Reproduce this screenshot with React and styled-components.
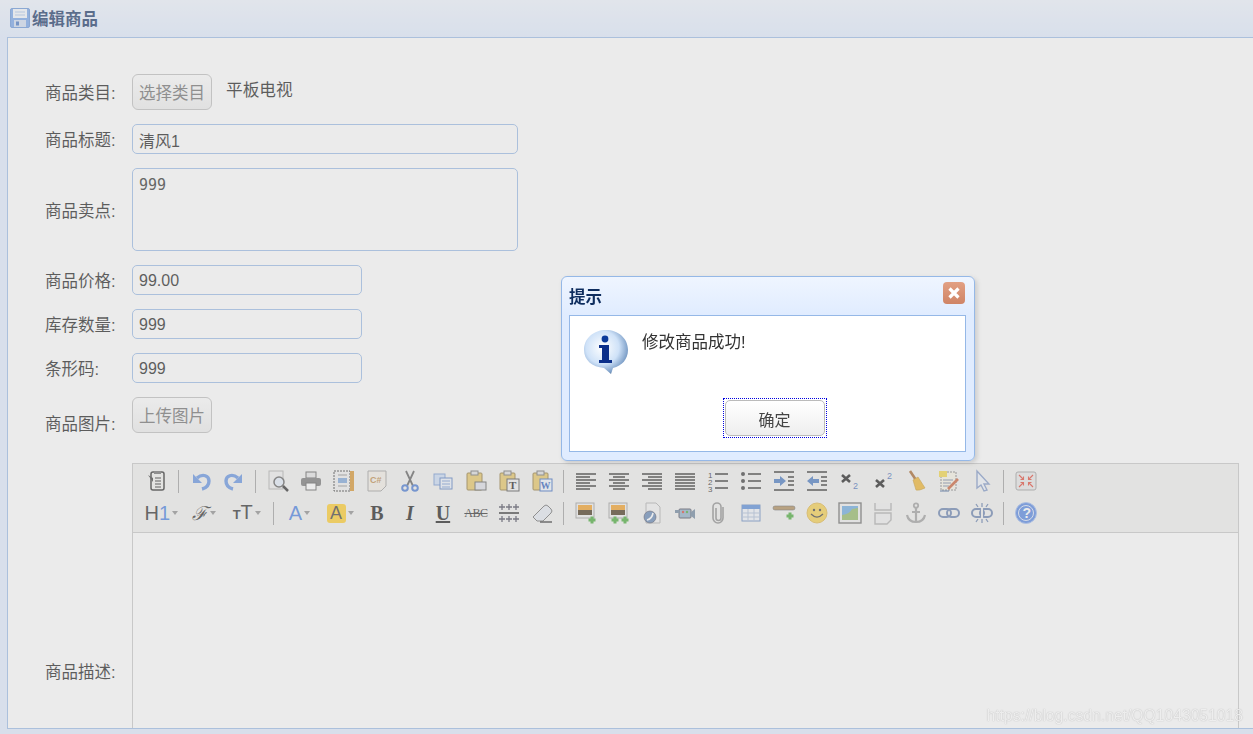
import styled, { createGlobalStyle } from "styled-components";

const GlobalStyle = createGlobalStyle`
  html, body { margin: 0; padding: 0; }
  body {
    font-family: "Liberation Sans", "Noto Sans CJK SC", sans-serif;
    font-size: 16px;
    color: #333;
  }
`;

const Page = styled.div`
  width: 1253px;
  height: 734px;
  overflow: hidden;
  background: #e0ecff;
`;

const PanelHeader = styled.div`
  box-sizing: border-box;
  height: 37px;
  padding: 0 0 2px 10px;
  display: flex;
  align-items: center;
  gap: 2px;
  background: linear-gradient(#eff5ff, #e0ecff);
`;

const PanelTitle = styled.span`
  font-size: 16.5px;
  font-weight: bold;
  color: #0e2d5f;
`;

const Panel = styled.div`
  box-sizing: border-box;
  width: 1250px;
  height: 692px;
  margin-left: 7px;
  padding: 36px 0 0 37px;
  border: 1px solid #95b8e7;
  background: #fff;
  overflow: hidden;
  display: flex;
  flex-direction: column;
  gap: 14px;
`;

const Row = styled.div`
  display: grid;
  grid-template-columns: 87px auto;
  justify-content: start;
  align-items: ${(p) => p.$align || "center"};
  margin-top: ${(p) => p.$top || 0}px;
`;

const Label = styled.label`
  padding-top: 2px;
  font-size: 16.5px;
  line-height: 18px;
  color: #111;
`;

const Field = styled.div`
  display: flex;
  align-items: center;
`;

const Input = styled.input`
  box-sizing: border-box;
  width: ${(p) => p.$w}px;
  height: 30px;
  padding: 2px 6px 0;
  border: 1px solid #95b8e7;
  border-radius: 5px;
  background: #fff;
  font: inherit;
  color: #111;
  outline: none;
`;

const TextArea = styled.textarea`
  box-sizing: border-box;
  width: 386px;
  height: 83px;
  padding: 7px 6px;
  border: 1px solid #95b8e7;
  border-radius: 5px;
  background: #fff;
  font-family: "DejaVu Sans Mono", monospace;
  font-size: 15px;
  color: #222;
  resize: none;
  outline: none;
`;

const GreyButton = styled.button`
  box-sizing: border-box;
  width: 80px;
  height: 36px;
  padding: 0;
  border: 1px solid #bbb;
  border-radius: 6px;
  background: linear-gradient(#fff, #eee);
  font: inherit;
  font-size: 16.5px;
  color: #666;
`;

const Category = styled.span`
  margin: 0 0 6px 14px;
  font-size: 16.7px;
  color: #111;
`;

const Editor = styled.div`
  box-sizing: border-box;
  width: 1107px;
  height: 416px;
  border: 1px solid #c5c5c5;
  background: #fff;
`;

const Toolbar = styled.div`
  height: 64px;
  padding: 1px 0 3px 7px;
  display: flex;
  flex-direction: column;
  background: #f1f1ef;
  border-bottom: 1px solid #c5c5c5;
`;

const ToolRow = styled.div`
  height: 32px;
  display: flex;
  align-items: center;
`;

const ToolButton = styled.div`
  flex: none;
  width: ${(p) => p.$w || 33}px;
  height: 32px;
  display: flex;
  align-items: center;
  justify-content: center;
  gap: 2px;
`;

const Separator = styled.div`
  flex: none;
  width: 1px;
  height: 23px;
  margin: 0 5px;
  background: #999;
`;

const Caret = styled.i`
  width: 0;
  height: 0;
  border: 3.5px solid transparent;
  border-top: 4px solid #888;
  border-bottom: 0;
`;

const ComboText = styled.span`
  font-size: 20px;
  line-height: 24px;
  color: ${(p) => p.$color || "#222"};
`;

const FontGlyph = styled.span`
  font-family: "DejaVu Serif", serif;
  font-style: italic;
  font-size: 19px;
  line-height: 24px;
  color: #222;
`;

const SmallT = styled.span`
  font-size: 13px;
  font-weight: bold;
  color: #222;
`;

const Highlight = styled.span`
  width: 19px;
  height: 19px;
  border-radius: 3px;
  background: #ffca1e;
  font-size: 18px;
  line-height: 19px;
  text-align: center;
  color: #333;
`;

const SerifGlyph = styled.span`
  font-family: "Liberation Serif", serif;
  font-weight: bold;
  font-style: ${(p) => (p.$italic ? "italic" : "normal")};
  font-size: 20px;
  line-height: 24px;
  color: #111;
  text-decoration: ${(p) => (p.$under ? "underline" : "none")};
`;

const StrikeGlyph = styled.span`
  font-family: "Liberation Serif", serif;
  font-size: 12px;
  letter-spacing: -0.5px;
  color: #222;
  text-decoration: line-through;
`;

const Mask = styled.div`
  position: fixed;
  inset: 0;
  background: rgba(204, 204, 204, 0.4);
`;

const Dialog = styled.div`
  position: fixed;
  left: 561px;
  top: 276px;
  box-sizing: border-box;
  width: 414px;
  height: 185px;
  padding: 0 8px 8px 7px;
  display: flex;
  flex-direction: column;
  border: 1px solid #95b8e7;
  border-radius: 6px;
  background: linear-gradient(#eff5ff, #e0ecff 38px);
  box-shadow: 2px 2px 5px rgba(0, 0, 0, 0.15);
`;

const DialogHead = styled.div`
  flex: none;
  height: 38px;
  display: flex;
  align-items: center;
  justify-content: space-between;
`;

const DialogTitle = styled.span`
  font-size: 16.5px;
  font-weight: bold;
  color: #0e2d5f;
`;

const Close = styled.span`
  width: 22px;
  height: 22px;
  margin: -6px 1px 0 0;
  border-radius: 4px;
  background: linear-gradient(#e2a084, #cf8466);
  display: flex;
  align-items: center;
  justify-content: center;
`;

const DialogBody = styled.div`
  flex: 1;
  display: flex;
  flex-direction: column;
  border: 1px solid #95b8e7;
  background: #fff;
`;

const Message = styled.div`
  display: flex;
  gap: 14px;
  padding: 14px 0 0 14px;
  font-size: 16.5px;
  line-height: 24px;
  color: #333;
`;

const DialogActions = styled.div`
  margin-top: auto;
  padding: 0 0 13px 14px;
  display: flex;
  justify-content: center;
`;

const FocusRing = styled.div`
  padding: 1px;
  border: 1px dotted #0000e0;
  display: flex;
`;

const OkButton = styled.button`
  box-sizing: border-box;
  width: 100px;
  height: 36px;
  padding: 1px 0 0;
  border: 1px solid #bbb;
  border-radius: 5px;
  background: linear-gradient(#fff, #eee);
  font: inherit;
  color: #444;
  outline: none;
`;

const Watermark = styled.div`
  position: fixed;
  right: 10px;
  top: 706px;
  font-size: 15.7px;
  line-height: 20px;
  color: rgba(255, 255, 255, 0.8);
  text-shadow: 0 0 1px rgba(110, 110, 110, 0.6);
`;

const Bars = ({ rows, color = "#1a1a1a", width = 1.7 }) => (
  <path d={rows.map(([a, b, y]) => `M${a} ${y}H${b}`).join("")} stroke={color} strokeWidth={width} fill="none" />
);

const align = (odd, even) => [5, 8, 11, 14, 17, 20].map((y, i) => [...(i % 2 ? even : odd), y]);

const Plus = ({ x, y }) => <path d={`M${x - 3.5} ${y}h7M${x} ${y - 3.5}v7`} stroke="#3fa52e" strokeWidth="3" />;

const Board = () => (
  <>
    <rect x="3" y="4" width="15" height="17" rx="1" fill="#e6c45c" stroke="#8a7030" />
    <rect x="7" y="2" width="7" height="4" fill="#ddd" stroke="#666" />
  </>
);

const Sunset = () => (
  <>
    <rect x="2" y="2" width="18" height="15" fill="#eee" stroke="#999" />
    <rect x="4" y="4" width="14" height="5" fill="#f29a1a" />
    <rect x="4" y="9" width="14" height="5" fill="#3c2a10" />
  </>
);

const Arrow = ({ left }) => (
  <path d={left ? "M2 12l6-5v3h6v4H8v3z" : "M14 12l-6-5v3H2v4h6v3z"} fill="#3f72bd" />
);

const LinkPills = () => (
  <>
    <rect x="2" y="8" width="12" height="8" rx="4" fill="none" stroke="#627cab" strokeWidth="2" />
    <rect x="10" y="8" width="12" height="8" rx="4" fill="none" stroke="#627cab" strokeWidth="2" />
  </>
);

const Undo = () => (
  <>
    <path d="M8 9c6-5 12-2 12 3 0 4-3 7-7 8" stroke="#5a8ce0" strokeWidth="3.4" fill="none" />
    <path d="M4 5v9h9z" fill="#5a8ce0" />
  </>
);

const icons = {
  template: (
    <>
      <rect x="6" y="3" width="13" height="18" rx="2" fill="#f2f2ee" stroke="#222" strokeWidth="1.5" />
      <rect x="9" y="2" width="7" height="3" fill="#666" />
      <Bars rows={[[10, 16, 9], [10, 16, 12], [10, 16, 15], [10, 16, 18]]} width={1} />
      <path d="M3 6l5 3v4z" fill="#333" />
    </>
  ),
  undo: <Undo />,
  redo: (
    <g transform="translate(24) scale(-1 1)">
      <Undo />
    </g>
  ),
  preview: (
    <>
      <rect x="3" y="2" width="14" height="18" fill="#eee" stroke="#aaa" />
      <circle cx="13" cy="13" r="5" fill="#e3edfb" stroke="#555" strokeWidth="1.5" />
      <path d="M17 17l5 5" stroke="#222" strokeWidth="2.5" />
    </>
  ),
  print: (
    <>
      <rect x="7" y="3" width="10" height="6" fill="#e4e4e4" stroke="#555" />
      <rect x="2" y="9" width="20" height="8" rx="2" fill="#6f6f6f" />
      <rect x="7" y="14" width="10" height="7" fill="#fff" stroke="#555" />
    </>
  ),
  page: (
    <>
      <rect x="2" y="2" width="16" height="20" fill="#eee" stroke="#333" strokeDasharray="2 1" />
      <rect x="18" y="2" width="4" height="20" fill="#d68e22" />
      <rect x="6" y="9" width="9" height="5" fill="#76a0d8" />
      <Bars rows={[[6, 15, 6], [6, 15, 17]]} color="#888" width={1} />
    </>
  ),
  code: (
    <>
      <path d="M3 2h18v15l-5 5H3z" fill="#f3efe6" stroke="#999" />
      <text x="5" y="14" fontSize="9" fontWeight="bold" fontFamily="Liberation Sans" fill="#bb8444">C#</text>
    </>
  ),
  cut: (
    <>
      <path d="M8 2l7 15M16 2L9 17" stroke="#555" strokeWidth="1.8" />
      <circle cx="7" cy="19" r="2.8" fill="none" stroke="#3f72d0" strokeWidth="2" />
      <circle cx="17" cy="19" r="2.8" fill="none" stroke="#3f72d0" strokeWidth="2" />
    </>
  ),
  copy: (
    <>
      <rect x="3" y="5" width="11" height="11" fill="#c8daf5" stroke="#6f93d0" />
      <rect x="9" y="9" width="12" height="11" fill="#eaf1fb" stroke="#4f77bd" />
      <Bars rows={[[11, 19, 12], [11, 19, 15], [11, 19, 18]]} color="#6f93d0" width={1} />
    </>
  ),
  paste: (
    <>
      <Board />
      <rect x="11" y="13" width="11" height="8" fill="#dcdee6" stroke="#555" />
    </>
  ),
  pasteText: (
    <>
      <Board />
      <rect x="10" y="10" width="12" height="12" fill="#eee" stroke="#444" />
      <text x="12" y="20" fontSize="11" fontWeight="bold" fontFamily="Liberation Serif" fill="#111">T</text>
    </>
  ),
  pasteWord: (
    <>
      <Board />
      <rect x="10" y="10" width="12" height="12" fill="#eef3fb" stroke="#2f62bd" />
      <text x="10.5" y="20" fontSize="10" fontWeight="bold" fontFamily="Liberation Serif" fill="#2256b8">W</text>
    </>
  ),
  left: <Bars rows={align([2, 22], [2, 16])} />,
  center: <Bars rows={align([2, 22], [6, 18])} />,
  right: <Bars rows={align([2, 22], [8, 22])} />,
  justify: <Bars rows={align([2, 22], [2, 22])} />,
  ol: (
    <>
      <text x="2" y="9" fontSize="8" fontFamily="Liberation Sans" fill="#222">1</text>
      <text x="2" y="16" fontSize="8" fontFamily="Liberation Sans" fill="#222">2</text>
      <text x="2" y="23" fontSize="8" fontFamily="Liberation Sans" fill="#222">3</text>
      <Bars rows={[[9, 22, 5], [9, 22, 12], [9, 22, 19]]} />
    </>
  ),
  ul: (
    <>
      <circle cx="4" cy="5" r="2" fill="#333" />
      <circle cx="4" cy="12" r="2" fill="#333" />
      <circle cx="4" cy="19" r="2" fill="#333" />
      <Bars rows={[[9, 22, 5], [9, 22, 12], [9, 22, 19]]} />
    </>
  ),
  indent: (
    <>
      <Bars rows={[[2, 22, 3], [16, 22, 8], [16, 22, 12], [16, 22, 16], [2, 22, 21]]} />
      <Arrow />
    </>
  ),
  outdent: (
    <>
      <Bars rows={[[2, 22, 3], [16, 22, 8], [16, 22, 12], [16, 22, 16], [2, 22, 21]]} />
      <Arrow left />
    </>
  ),
  sub: (
    <>
      <path d="M4 6l8 7M12 6l-8 7" stroke="#111" strokeWidth="2.6" />
      <text x="15" y="20" fontSize="9" fontFamily="Liberation Sans" fill="#3f68b5">2</text>
    </>
  ),
  sup: (
    <>
      <path d="M5 11l8 7M13 11l-8 7" stroke="#111" strokeWidth="2.6" />
      <text x="16" y="10" fontSize="9" fontFamily="Liberation Sans" fill="#3f68b5">2</text>
    </>
  ),
  broom: (
    <>
      <path d="M6 2l6 9" stroke="#a05c1e" strokeWidth="2.6" />
      <path d="M9 11l5-3 7 11q-6 3-9 2z" fill="#eeb020" stroke="#c08a14" strokeWidth="0.6" />
    </>
  ),
  format: (
    <>
      <rect x="4" y="3" width="15" height="18" fill="#f7f3e4" stroke="#777" strokeDasharray="2 1" />
      <rect x="2" y="2" width="8" height="6" fill="#f2d43c" />
      <Bars rows={[[6, 16, 11], [6, 14, 14], [6, 12, 17]]} color="#6f7f9c" width={1} />
      <path d="M11 20l10-10" stroke="#c9592e" strokeWidth="2.6" />
      <path d="M3 22h9" stroke="#2f5590" />
    </>
  ),
  cursor: <path d="M7 2v17l4-3 3 6 3-1-3-6h5z" fill="#eef3fb" stroke="#7a93c4" strokeWidth="1.4" />,
  full: (
    <>
      <rect x="2" y="3" width="20" height="18" rx="2" fill="#e6e6e6" stroke="#999" />
      <path d="M5 6l4 4M19 6l-4 4M5 18l4-4M19 18l-4-4M9.5 7.5v3h-3M14.5 7.5v3h3M9.5 16.5v-3h-3M14.5 16.5v-3h3" stroke="#e0402e" strokeWidth="1.1" fill="none" />
    </>
  ),
  rows: (
    <>
      <path d="M2 12h20" stroke="#444" strokeWidth="2" />
      <path d="M5 3v6M2 6h6M12 3v6M9 6h6M19 3v6M16 6h6M5 15v6M2 18h6M12 15v6M9 18h6M19 15v6M16 18h6" stroke="#445" strokeWidth="1.3" />
    </>
  ),
  eraser: (
    <>
      <path d="M3 16L14 5q2-2 4 0l3 3q2 2 0 4l-8 8H7z" fill="#e4e9f2" stroke="#666" />
      <path d="M10 21h12" stroke="#222" strokeWidth="1.4" />
    </>
  ),
  image: (
    <>
      <Sunset />
      <Plus x={18} y={19} />
    </>
  ),
  images: (
    <>
      <Sunset />
      <Plus x={8} y={19} />
      <Plus x={18} y={19} />
    </>
  ),
  flash: (
    <>
      <path d="M6 2h10l4 4v16H6z" fill="#f2f2f2" stroke="#aaa" />
      <circle cx="10" cy="16" r="6" fill="#5a7fb0" stroke="#334" strokeWidth="0.6" />
      <path d="M7 19q5-1 6-7" stroke="#fff" strokeWidth="1.6" fill="none" />
    </>
  ),
  video: (
    <>
      <rect x="6" y="8" width="12" height="9" rx="1" fill="#8aabc5" stroke="#445" />
      <path d="M18 11l4-3v10l-4-3zM2 9h4v3H2z" fill="#667f98" />
      <circle cx="10" cy="11" r="1.2" fill="#d93c30" />
      <circle cx="14" cy="11" r="1.2" fill="#3fa52e" />
    </>
  ),
  attach: <path d="M10 7v10a2.5 2.5 0 0 0 5 0V6a4 4 0 0 0-8 0v11a5 5 0 0 0 10 0V6" stroke="#888" strokeWidth="1.6" fill="none" />,
  table: (
    <>
      <rect x="3" y="4" width="18" height="16" fill="#f0f4fa" stroke="#5f82bb" />
      <rect x="3" y="4" width="18" height="4" fill="#4f85d8" />
      <path d="M3 12h18M3 16h18M9 8v12M15 8v12" stroke="#a9bad6" />
    </>
  ),
  hr: (
    <>
      <rect x="1" y="5" width="22" height="4" rx="2" fill="#ab8650" stroke="#555" strokeWidth="0.6" />
      <Plus x={18} y={15} />
    </>
  ),
  smile: (
    <>
      <circle cx="12" cy="12" r="10" fill="#f5cd44" stroke="#e0b33c" />
      <circle cx="9" cy="9" r="1.2" fill="#333" />
      <circle cx="15" cy="9" r="1.2" fill="#333" />
      <path d="M6 13q6 6 12 0" stroke="#333" strokeWidth="1.2" fill="none" />
    </>
  ),
  picture: (
    <>
      <rect x="1" y="2" width="22" height="20" fill="#eee" stroke="#666" strokeWidth="1.4" />
      <rect x="4" y="5" width="16" height="14" fill="#62a4de" />
      <path d="M4 19v-5q8-1 10-6l6-1v12z" fill="#8cb45c" />
    </>
  ),
  pagebreak: (
    <>
      <path d="M4 2v7h16V2" fill="#eee" stroke="#aaa" strokeWidth="1.4" />
      <path d="M4 23V12h16v7l-4 4z" fill="#eee" stroke="#aaa" strokeWidth="1.4" />
    </>
  ),
  anchor: (
    <>
      <circle cx="12" cy="4.5" r="2.2" fill="none" stroke="#999" strokeWidth="1.8" />
      <path d="M12 7v14M8 11h8M3 14c1 5 5 7 9 7s8-2 9-7" stroke="#999" strokeWidth="2.2" fill="none" />
    </>
  ),
  link: <LinkPills />,
  unlink: (
    <>
      <LinkPills />
      <path d="M12 2v4M12 18v4M6 3l2 3M18 3l-2 3M6 21l2-3M18 21l-2-3" stroke="#627cab" strokeWidth="1.3" />
      <path d="M11 7h2v10h-2z" fill="#f1f1ef" />
    </>
  ),
  help: (
    <>
      <circle cx="12" cy="12" r="10.5" fill="#4a7ee0" stroke="#9ab8ee" />
      <circle cx="12" cy="12" r="7.5" fill="none" stroke="#dbe6fa" />
      <text x="8.5" y="17" fontSize="14" fontWeight="bold" fontFamily="Liberation Sans" fill="#fff">?</text>
    </>
  ),
};

const Icon = ({ name }) => (
  <svg width="24" height="24" viewBox="0 0 24 24">{icons[name]}</svg>
);

const topRow = ["template", "|", "undo", "redo", "|", "preview", "print", "page", "code", "cut", "copy", "paste", "pasteText", "pasteWord", "|", "left", "center", "right", "justify", "ol", "ul", "indent", "outdent", "sub", "sup", "broom", "format", "cursor", "|", "full"];
const bottomRow = ["rows", "eraser", "|", "image", "images", "flash", "video", "attach", "table", "hr", "smile", "picture", "pagebreak", "anchor", "link", "unlink", "|", "help"];

const Tools = ({ list }) =>
  list.map((name, i) =>
    name === "|" ? <Separator key={i} /> : <ToolButton key={i}><Icon name={name} /></ToolButton>
  );

const Floppy = () => (
  <svg width="20" height="20" viewBox="0 0 20 20">
    <rect x="0.5" y="0.5" width="19" height="19" rx="1.5" fill="#6f9fe8" stroke="#5f8fd8" />
    <rect x="3" y="1" width="14" height="9" fill="#f3f7fd" />
    <path d="M5 4h10M5 7h10" stroke="#a9c2ea" />
    <rect x="4" y="12" width="12" height="7" fill="#cfdcf2" />
    <rect x="6" y="13.5" width="3" height="4" fill="#3f70c0" />
  </svg>
);

const InfoIcon = () => (
  <svg width="44" height="44" viewBox="0 0 44 44">
    <defs>
      <radialGradient id="bubble" cx="0.42" cy="0.4" r="0.68">
        <stop offset="0" stopColor="#ffffff" />
        <stop offset="0.55" stopColor="#cfe2f8" />
        <stop offset="0.85" stopColor="#7d9fc8" />
        <stop offset="1" stopColor="#3d5878" />
      </radialGradient>
    </defs>
    <path d="M22 0C34 0 44 8 44 20c0 9-6 16-15 18l-2 6-7-6C8 37 0 30 0 20 0 8 10 0 22 0z" fill="url(#bubble)" />
    <circle cx="21" cy="9" r="3.4" fill="#0b3a9a" />
    <path d="M15 15h10v15h3v3H15v-3h3V18h-3z" fill="#0b2f8a" />
  </svg>
);

function App() {
  return (
    <Page>
      <GlobalStyle />
      <PanelHeader>
        <Floppy />
        <PanelTitle>编辑商品</PanelTitle>
      </PanelHeader>
      <Panel>
        <Row>
          <Label>商品类目:</Label>
          <Field>
            <GreyButton>选择类目</GreyButton>
            <Category>平板电视</Category>
          </Field>
        </Row>
        <Row>
          <Label>商品标题:</Label>
          <Input $w={386} readOnly value="清风1" />
        </Row>
        <Row>
          <Label>商品卖点:</Label>
          <TextArea readOnly value="999" />
        </Row>
        <Row>
          <Label>商品价格:</Label>
          <Input $w={230} readOnly value="99.00" />
        </Row>
        <Row>
          <Label>库存数量:</Label>
          <Input $w={230} readOnly value="999" />
        </Row>
        <Row>
          <Label>条形码:</Label>
          <Input $w={230} readOnly value="999" />
        </Row>
        <Row $align="end">
          <Label>商品图片:</Label>
          <GreyButton>上传图片</GreyButton>
        </Row>
        <Row $top={16}>
          <Label>商品描述:</Label>
          <Editor>
            <Toolbar>
              <ToolRow>
                <Tools list={topRow} />
              </ToolRow>
              <ToolRow>
                <ToolButton $w={42.7}>
                  <ComboText>H<ComboText $color="#3d78e0">1</ComboText></ComboText>
                  <Caret />
                </ToolButton>
                <ToolButton $w={42.7}>
                  <FontGlyph>ℱ</FontGlyph>
                  <Caret />
                </ToolButton>
                <ToolButton $w={42.7}>
                  <ComboText><SmallT>T</SmallT>T</ComboText>
                  <Caret />
                </ToolButton>
                <Separator />
                <ToolButton $w={40.7}>
                  <ComboText $color="#3d78e0">A</ComboText>
                  <Caret />
                </ToolButton>
                <ToolButton $w={40.7}>
                  <Highlight>A</Highlight>
                  <Caret />
                </ToolButton>
                <ToolButton><SerifGlyph>B</SerifGlyph></ToolButton>
                <ToolButton><SerifGlyph $italic>I</SerifGlyph></ToolButton>
                <ToolButton><SerifGlyph $under>U</SerifGlyph></ToolButton>
                <ToolButton><StrikeGlyph>ABC</StrikeGlyph></ToolButton>
                <Tools list={bottomRow} />
              </ToolRow>
            </Toolbar>
          </Editor>
        </Row>
      </Panel>
      <Mask />
      <Dialog>
        <DialogHead>
          <DialogTitle>提示</DialogTitle>
          <Close>
            <svg width="14" height="14" viewBox="0 0 14 14">
              <path d="M2.5 2.5l9 9M11.5 2.5l-9 9" stroke="#fff" strokeWidth="3.2" />
            </svg>
          </Close>
        </DialogHead>
        <DialogBody>
          <Message>
            <InfoIcon />
            <span>修改商品成功!</span>
          </Message>
          <DialogActions>
            <FocusRing>
              <OkButton>确定</OkButton>
            </FocusRing>
          </DialogActions>
        </DialogBody>
      </Dialog>
      <Watermark>https://blog.csdn.net/QQ1043051018</Watermark>
    </Page>
  );
}

export default App;
